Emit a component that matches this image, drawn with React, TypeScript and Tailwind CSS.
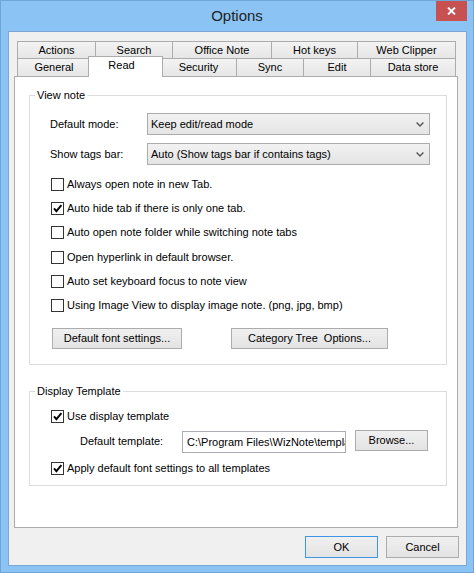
import React from "react";

const Check = ({ checked }: { checked?: boolean }) => (
  <span className="w-[13px] h-[13px] border border-[#333333] bg-white flex items-center justify-center shrink-0">
    {checked && (
      <svg width="11" height="11" viewBox="0 0 11 11">
        <path d="M2 5.3 L4.4 8.2 L9.4 2.2" fill="none" stroke="#000" strokeWidth="1.9" />
      </svg>
    )}
  </span>
);

const CheckRow = ({ label, checked, extra }: { label: string; checked?: boolean; extra?: string }) => (
  <div className={"h-[24px] flex items-center pl-[1px] " + (extra || "")}>
    <Check checked={checked} />
    <span className="ml-[3px] leading-[13px] whitespace-nowrap">{label}</span>
  </div>
);

const Chevron = () => (
  <svg width="8" height="5" viewBox="0 0 8 5">
    <path d="M0.6 0.6 L4 4 L7.4 0.6" fill="none" stroke="#555" strokeWidth="1.4" />
  </svg>
);

const Select = ({ value }: { value: string }) => (
  <div className="w-[283px] h-[22px] border border-[#acacac] bg-linear-to-b from-[#f2f2f2] to-[#e4e4e4] flex items-center pl-[3px] pr-[5px]">
    <span className="flex-1 leading-[13px] whitespace-nowrap">{value}</span>
    <Chevron />
  </div>
);

const Btn = ({ label, w, extra }: { label: string; w: string; extra?: string }) => (
  <div
    className={
      "h-[21px] border bg-linear-to-b from-[#f0f0f0] to-[#e3e3e3] flex items-center justify-center leading-[13px] whitespace-pre " +
      w +
      " " +
      (extra || "border-[#acacac]")
    }
  >
    {label}
  </div>
);

const row1: [string, string][] = [
  ["Actions", "w-[79px]"],
  ["Search", "w-[78px]"],
  ["Office Note", "w-[100px]"],
  ["Hot keys", "w-[87px]"],
  ["Web Clipper", "w-[99px]"],
];

const Tab = ({ label, w, first }: { label: string; w: string; first?: boolean }) => (
  <div
    className={
      "h-full flex items-center justify-center border-t border-x border-[#acacac] bg-linear-to-b from-[#f3f3f3] to-[#e6e6e6] leading-[13px] whitespace-nowrap " +
      w +
      (first ? "" : " -ml-px")
    }
  >
    {label}
  </div>
);

const Group = ({ title, children, extra }: { title: string; children: React.ReactNode; extra: string }) => (
  <div className={"relative ml-[14px] w-[418px] border border-[#dcdcdc] pl-[20px] " + extra}>
    <span className="absolute left-[5px] -top-[7px] bg-white px-[2px] leading-[13px]">{title}</span>
    {children}
  </div>
);

export default function App() {
  return (
    <div className="w-[474px] h-[573px] bg-[#8bc4f4] border border-[#6ea6d9] flex flex-col font-['Liberation_Sans',Arial,sans-serif] text-[11px] text-black overflow-hidden">
      <div className="relative h-[30px] flex items-center justify-center text-[15px] text-[#1e1e1e]">
        <span className="leading-[18px]">Options</span>
        <div className="absolute -top-px right-[6px] w-[31px] h-[21px] bg-[#c75050] flex items-center justify-center">
          <svg width="9" height="8" viewBox="0 0 9 8" className="mt-[1px]">
            <path d="M1 0.5 L8 7.5 M8 0.5 L1 7.5" stroke="#fff" strokeWidth="1.9" />
          </svg>
        </div>
      </div>

      <div className="ml-[7px] w-[459px] h-[535px] bg-[#f0f0f0] border border-[#7aa7d4] flex flex-col">
        <div className="ml-[5px] mt-[9px] flex flex-col">
          <div className="flex h-[17px] pl-[3px]">
            {row1.map(([l, w], i) => (
              <Tab key={l} label={l} w={w} first={i === 0} />
            ))}
          </div>
          <div className="flex h-[18px] pl-[3px] items-start">
            <Tab label="General" w="w-[74px]" first />
            <div className="relative z-10 bg-white -mt-[2px] h-[21px] w-[75px] -ml-[3px] -mr-[2px] border-t border-x border-[#acacac] flex justify-center pt-[2px] pr-[8px] leading-[13px]">
              Read
            </div>
            <Tab label="Security" w="w-[77px]" />
            <Tab label="Sync" w="w-[68px]" />
            <Tab label="Edit" w="w-[68px]" />
            <Tab label="Data store" w="w-[86px]" />
          </div>

          <div className="bg-white border border-[#acacac] h-[452px] w-[444px] flex flex-col">
            <Group title="View note" extra="mt-[18px] pt-[17px] pb-[15px]">
              <div className="flex items-center h-[22px]">
                <span className="w-[97px] leading-[13px]">Default mode:</span>
                <Select value="Keep edit/read mode" />
              </div>
              <div className="flex items-center h-[22px] mt-[8px]">
                <span className="w-[97px] leading-[13px]">Show tags bar:</span>
                <Select value="Auto (Show tags bar if contains tags)" />
              </div>
              <div className="mt-[7px] flex flex-col">
                <CheckRow label="Always open note in new Tab." />
                <CheckRow label="Auto hide tab if there is only one tab." checked />
                <CheckRow label="Auto open note folder while switching note tabs" />
                <CheckRow label="Open hyperlink in default browser." extra="mt-[1px]" />
                <CheckRow label="Auto set keyboard focus to note view" />
                <CheckRow label="Using Image View to display image note. (png, jpg, bmp)" />
              </div>
              <div className="flex mt-[11px] ml-[2px] gap-[49px]">
                <Btn label="Default font settings..." w="w-[130px]" />
                <Btn label="Category Tree  Options..." w="w-[157px]" />
              </div>
            </Group>

            <Group title="Display Template" extra="mt-[26px] pt-[12px] pb-[5px]">
              <CheckRow label="Use display template" checked />
              <div className="flex items-start h-[23px] mt-[2px] ml-[30px]">
                <span className="w-[102px] leading-[13px] mt-[5px]">Default template:</span>
                <div className="w-[164px] h-[22px] mt-[1px] border border-[#abadb3] bg-white flex items-center pl-[4px] overflow-hidden">
                  <span className="block w-full overflow-hidden whitespace-nowrap leading-[13px]">C:\Program Files\WizNote\templa</span>
                </div>
                <Btn label="Browse..." w="w-[73px] ml-[9px]" />
              </div>
              <CheckRow label="Apply default font settings to all templates" checked extra="mt-[3px]" />
            </Group>
          </div>
        </div>

        <div className="flex justify-end gap-[8px] mt-[8px] mr-[7px]">
          <Btn label="OK" w="w-[73px] h-[22px]" extra="border-[#3d95e6]" />
          <Btn label="Cancel" w="w-[73px] h-[22px]" />
        </div>
      </div>
    </div>
  );
}
